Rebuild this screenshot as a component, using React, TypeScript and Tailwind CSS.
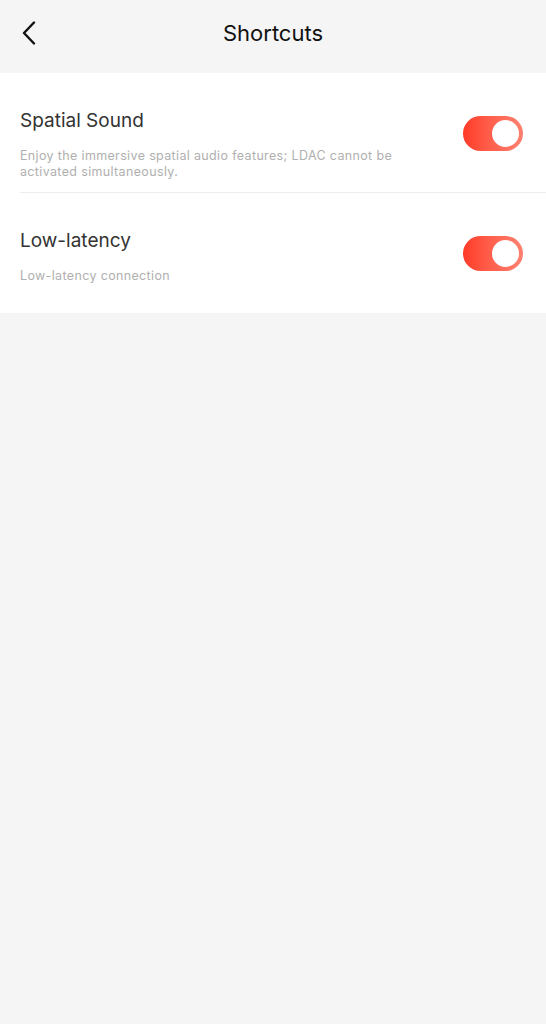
import React, { useState } from 'react';

type Item = {
  title: string;
  desc: string;
};

const items: Item[] = [
  {
    title: 'Spatial Sound',
    desc: 'Enjoy the immersive spatial audio features; LDAC cannot be activated simultaneously.',
  },
  {
    title: 'Low-latency',
    desc: 'Low-latency connection',
  },
];

const Toggle: React.FC<{ on: boolean; onChange: () => void }> = ({ on, onChange }) => (
  <button
    onClick={onChange}
    className={
      'relative w-[60px] h-[35px] rounded-full shrink-0 ' +
      (on ? 'bg-gradient-to-r from-[#ff3a26] to-[#ff8070]' : 'bg-[#e5e5e5]')
    }
  >
    <span
      className={
        'absolute top-[4px] w-[27px] h-[27px] rounded-full bg-white ' + (on ? 'right-[4px]' : 'left-[4px]')
      }
    />
  </button>
);

export default function App() {
  const [toggles, setToggles] = useState([true, true]);

  const flip = (i: number) => setToggles((t) => t.map((v, j) => (j === i ? !v : v)));

  return (
    <div className="min-h-screen bg-[#f5f5f5] font-['Inter',sans-serif]">
      {/* header */}
      <div className="relative h-[73px] flex items-center justify-center">
        <button className="absolute left-[18px] top-[19px] w-[22px] h-[28px] flex items-center justify-center">
          <svg width="16" height="24" viewBox="0 0 16 24" fill="none">
            <path d="M13 1.5L3 12l10 10.5" stroke="#111" strokeWidth="2.4" strokeLinecap="round" strokeLinejoin="round" />
          </svg>
        </button>
        <h1 className="text-[22px] font-normal text-[#111] -mt-[6px]">Shortcuts</h1>
      </div>

      <div className="bg-white">
        {items.map((item, i) => (
          <div key={item.title} className="pl-[20px]">
            <div
              className={
                'h-[120px] flex items-start justify-between pr-[23px] pt-[36px] ' +
                (i < items.length - 1 ? 'border-b border-[#ececec]' : '')
              }
            >
              <div className="max-w-[400px]">
                <div className="text-[19px] leading-[24px] text-[#333]">{item.title}</div>
                <div className="mt-[15px] text-[12.5px] leading-[15.5px] tracking-[0.35px] text-[#b0b0b0]">
                  {item.desc}
                </div>
              </div>
              <div className="mt-[7px]">
                <Toggle on={toggles[i]} onChange={() => flip(i)} />
              </div>
            </div>
          </div>
        ))}
      </div>
    </div>
  );
}
